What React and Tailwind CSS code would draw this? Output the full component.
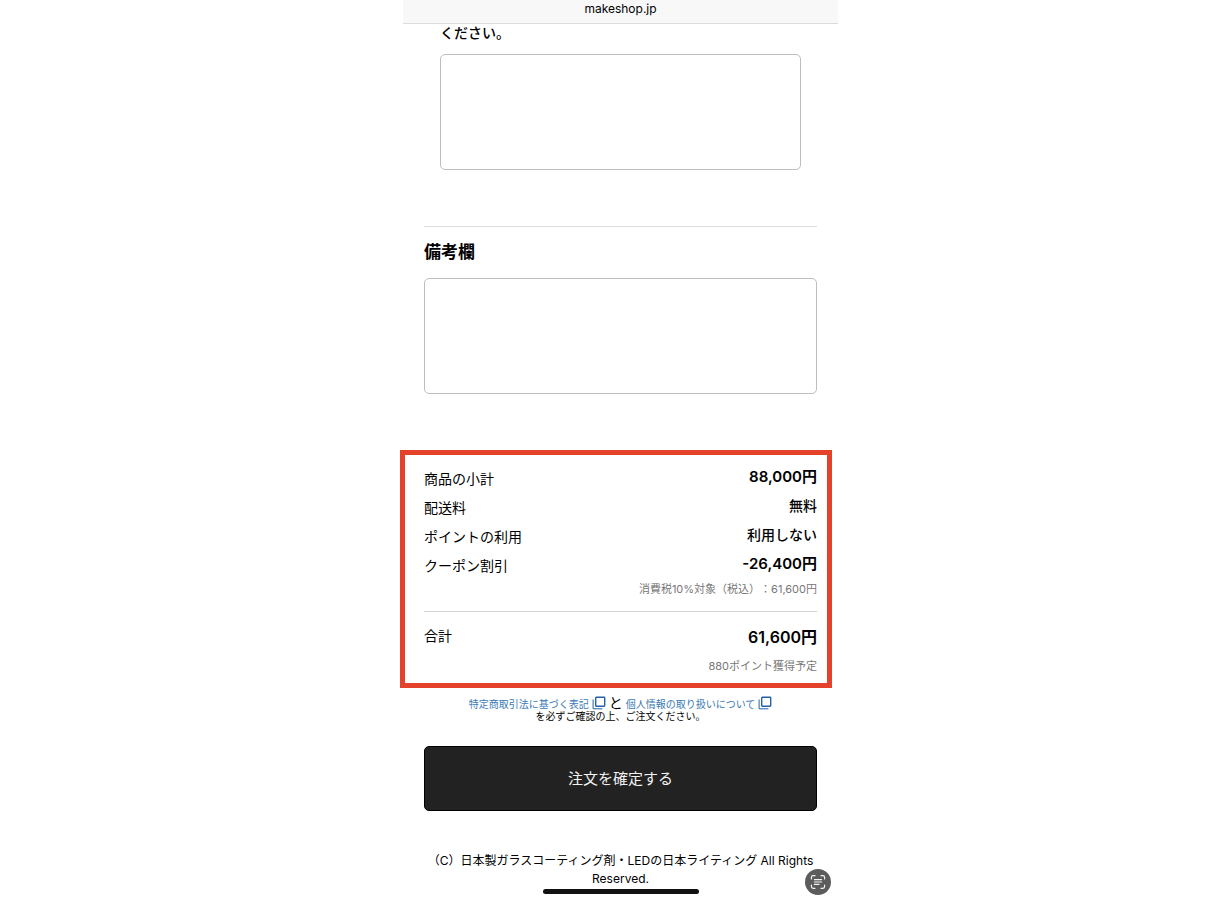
const rows = [
  { label: "商品の小計", value: "88,000円", style: "text-[15px] font-semibold" },
  { label: "配送料", value: "無料", style: "text-sm font-medium" },
  { label: "ポイントの利用", value: "利用しない", style: "text-sm font-medium" },
  { label: "クーポン割引", value: "-26,400円", style: "text-[15px] font-semibold" },
];

function WindowIcon() {
  return (
    <svg viewBox="0 0 14 14" className="ml-[3px] h-[14px] w-[14px] shrink-0" fill="none" stroke="#2262a8">
      <rect x="3.7" y="1.2" width="9" height="9" rx="0.6" strokeWidth="1.4" />
      <path d="M1.1 3.5v9.3h9.3" strokeWidth="1" />
    </svg>
  );
}

function ScanIcon() {
  return (
    <svg viewBox="0 0 26 26" className="h-[26px] w-[26px]" fill="none" stroke="#f2f2f2" strokeWidth="1.2" strokeLinecap="round">
      <path d="M6.4 10V8.4c0-1 .7-1.7 1.7-1.7h1.9M16 6.7h1.9c1 0 1.7.7 1.7 1.7V10M19.6 16v1.6c0 1-.7 1.7-1.7 1.7H16M10 19.3H8.1c-1 0-1.7-.7-1.7-1.7V16" />
      <path d="M9.4 10.6h7.2M9.4 13h7.2M9.4 15.4h4.6" />
    </svg>
  );
}

function Summary() {
  return (
    <section className="-ml-[3px] mr-[6px] mt-14 border-[5px] border-[#e5422b] pt-[10px] pr-[10px] pb-[9px] pl-[19px]">
      <dl className="flex flex-col justify-between text-sm leading-6">
        {rows.map((row) => (
          <div key={row.label} className="flex h-[29px] items-start justify-between">
            <dt className="pt-[2px]">{row.label}</dt>
            <dd className={`${row.style} leading-[23px]`}>{row.value}</dd>
          </div>
        ))}
      </dl>
      <p className="text-right text-[11px] leading-4 text-[#777]">消費税10%対象（税込）：61,600円</p>
      <dl className="mt-[14px] flex justify-between border-t border-[#d4d4d4] pt-3 text-sm leading-6">
        <dt>合計</dt>
        <dd className="text-base font-semibold leading-[26px]">61,600円</dd>
      </dl>
      <p className="mt-2 text-right text-[11px] leading-4 text-[#777]">880ポイント獲得予定</p>
    </section>
  );
}

function App() {
  return (
    <div
      lang="ja"
      className="min-h-screen bg-white pl-[13px] font-[Inter,'Noto_Sans_CJK_JP',sans-serif] text-black [text-spacing-trim:space-all]"
    >
      <div className="mx-auto max-w-[435px]">
        <header className="h-6 border-b border-[#dcdcdc] bg-[#f8f8f8] text-center text-xs leading-[18px]">
          makeshop.jp
        </header>

        <main>
          <div className="px-[37px]">
            <label htmlFor="request" className="block text-sm font-medium leading-[18px]">
              ください。
            </label>
            <textarea id="request" className="mt-3 block h-[116px] w-full resize-none rounded-[5px] border border-[#bdbdbd]" />
          </div>

          <div className="mx-[21px] mt-14 border-t border-[#dedede] pt-[13px]">
            <label htmlFor="remarks" className="block text-[17px] font-semibold leading-6">
              備考欄
            </label>
            <textarea id="remarks" className="mt-[14px] block h-[116px] w-full resize-none rounded-[5px] border border-[#bdbdbd]" />
          </div>

          <Summary />

          <div className="mt-2 text-center text-[10px]">
            <div className="flex h-[14px] items-center justify-center">
              <a href="#law" className="flex items-end leading-3 text-[#3a7ab5]">
                特定商取引法に基づく表記
                <WindowIcon />
              </a>
              <span className="mx-[3px] text-sm leading-[14px]">と</span>
              <a href="#privacy" className="flex items-end leading-3 text-[#3a7ab5]">
                個人情報の取り扱いについて
                <WindowIcon />
              </a>
            </div>
            <p className="leading-3">を必ずご確認の上、ご注文ください。</p>
          </div>

          <div className="px-[21px] pt-6">
            <button type="button" className="h-[65px] w-full rounded-[5px] border border-black bg-[#222] pt-[2px] text-[15px] text-[#f2f2f2]">
              注文を確定する
            </button>
          </div>
        </main>

        <footer className="relative mt-[41px] px-4 text-center text-xs">
          <p className="leading-[18px]">（C）日本製ガラスコーティング剤・LEDの日本ライティング All Rights Reserved.</p>
          <div className="mx-auto mt-px h-[5px] w-[156px] rounded-full bg-[#111]" />
          <button
            type="button"
            aria-label="テキストを認識"
            className="absolute right-[7px] -bottom-[1px] rounded-full bg-[#5c5c5c]"
          >
            <ScanIcon />
          </button>
        </footer>
      </div>
    </div>
  );
}

export default App;
